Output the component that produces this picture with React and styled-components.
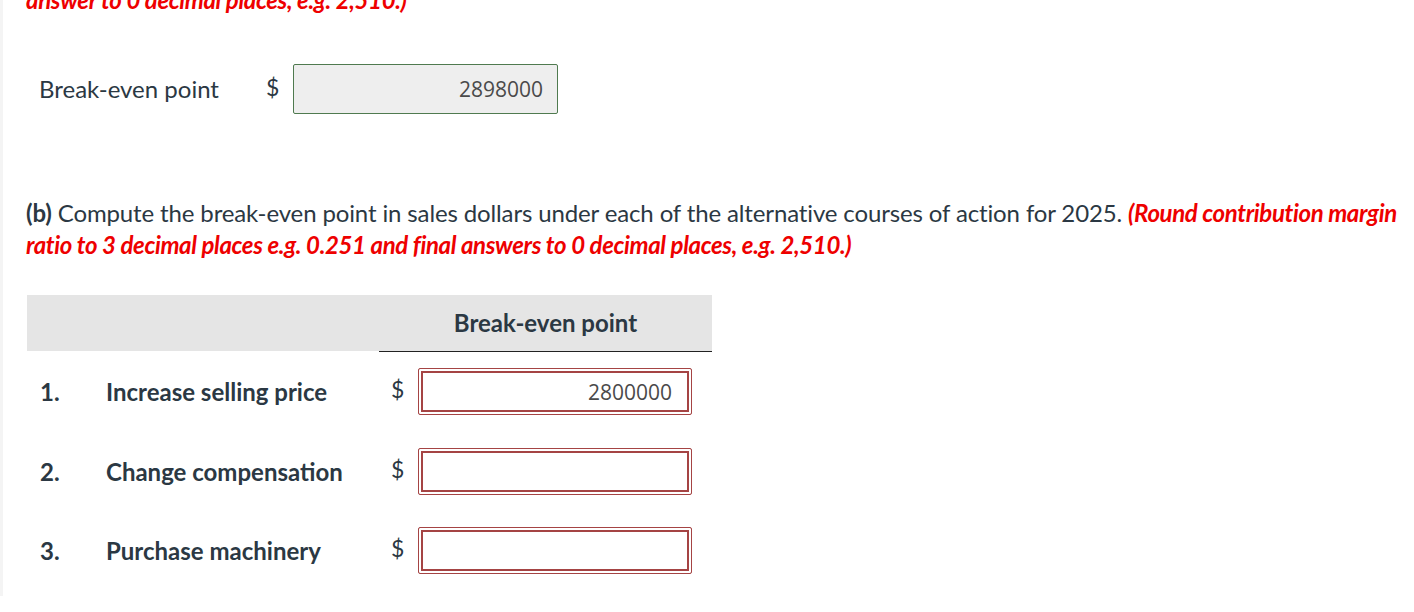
import React from "react";
import styled, { createGlobalStyle } from "styled-components";

const Global = createGlobalStyle`
  html, body { margin: 0; padding: 0; background: #fff; }
  body { font-family: Lato, "Open Sans", sans-serif; color: #2b3843; overflow: hidden; }
`;

const Page = styled.div`
  border-left: 3px solid #f4f4f4;
  padding-left: 23px;
  min-height: 612px;
  box-sizing: border-box;
`;

const Para = styled.p`
  margin: ${(p) => p.$margin || "0"};
  font-size: 24px;
  line-height: 32px;
  color: #2b3843;
  letter-spacing: -0.13px;
`;

const Hint = styled.span`
  color: #ee0000;
  font-weight: 700;
  font-style: italic;
  letter-spacing: -0.36px;
`;

const Strong = styled.b`
  font-weight: 700;
`;

const FieldRow = styled.div`
  display: flex;
  align-items: center;
  margin-top: 48px;
  padding-left: 13px;
  height: 50px;
`;

const FieldLabel = styled.span`
  font-size: 24px;
  width: 227px;
  margin-top: -2px;
`;

const Dollar = styled.span`
  font-size: 23px;
  width: 27px;
  line-height: 1;
  margin-top: ${(p) => p.$offset || "0"};
`;

const Filled = styled.div`
  box-sizing: border-box;
  width: 265px;
  height: 50px;
  background: #eeeeee;
  border: 1px solid #4f7a4f;
  border-radius: 2px;
  display: flex;
  align-items: center;
  justify-content: flex-end;
  padding-right: 14px;
  font-family: "Open Sans", "Liberation Sans", sans-serif;
  font-size: 21px;
  color: #4a4a4a;
`;

const Table = styled.div`
  margin-top: 34px;
  width: 685px;
  margin-left: 1px;
`;

const HeadRow = styled.div`
  display: grid;
  grid-template-columns: 352px 333px;
  height: 56px;
  background: #e5e5e5;
`;

const HeadCell = styled.div`
  display: flex;
  align-items: center;
  justify-content: center;
  font-size: 24px;
  font-weight: 700;
  padding-bottom: 2px;
`;

const HeadRule = styled.div`
  margin-left: 352px;
  width: 333px;
  border-top: 1px solid #222;
`;

const Row = styled.div`
  display: grid;
  grid-template-columns: 352px 333px;
  height: 79.5px;
  align-items: center;
`;

const Item = styled.div`
  display: flex;
  align-items: center;
  font-size: 24px;
  font-weight: 700;
  padding-left: 13px;
`;

const Num = styled.span`
  width: 66px;
`;

const AnswerCell = styled.div`
  display: flex;
  align-items: center;
  padding-left: 12px;
`;

const Answer = styled.div`
  box-sizing: border-box;
  width: 274px;
  height: 47px;
  border: 1px solid #a54444;
  border-radius: 2px;
  box-shadow: inset 0 0 0 2px #fff, inset 0 0 0 4px #a54444;
  display: flex;
  align-items: center;
  justify-content: flex-end;
  padding-right: 19px;
  font-family: "Open Sans", "Liberation Sans", sans-serif;
  font-size: 21px;
  color: #4a4a4a;
  background: #fff;
`;

const rows = [
  { n: "1.", label: "Increase selling price", value: "2800000" },
  { n: "2.", label: "Change compensation", value: "" },
  { n: "3.", label: "Purchase machinery", value: "" },
];

export default function App() {
  return (
    <>
      <Global />
      <Page>
        <Para $margin="-16px 0 0 0">
          <Hint>answer to 0 decimal places, e.g. 2,510.)</Hint>
        </Para>
        <FieldRow>
          <FieldLabel>Break-even point</FieldLabel>
          <Dollar $offset="-4px">$</Dollar>
          <Filled>2898000</Filled>
        </FieldRow>
        <Para $margin="83px 0 0 0">
          <Strong>(b)</Strong> Compute the break-even point in sales dollars under each of the alternative courses of action for 2025.{" "}
          <Hint>
            (Round contribution margin ratio to 3 decimal places e.g. 0.251 and final answers to 0 decimal places, e.g. 2,510.)
          </Hint>
        </Para>
        <Table>
          <HeadRow>
            <div />
            <HeadCell>Break-even point</HeadCell>
          </HeadRow>
          <HeadRule />
          {rows.map((r) => (
            <Row key={r.n}>
              <Item>
                <Num>{r.n}</Num>
                {r.label}
              </Item>
              <AnswerCell>
                <Dollar $offset="-4px">$</Dollar>
                <Answer>{r.value}</Answer>
              </AnswerCell>
            </Row>
          ))}
        </Table>
      </Page>
    </>
  );
}
